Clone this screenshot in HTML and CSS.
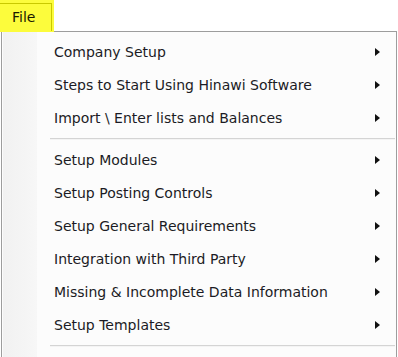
FILE: index.html
```html
<!DOCTYPE html>
<html>
<head>
<meta charset="utf-8">
<link rel="stylesheet" href="styles.css">
</head>
<body>
<div class="bar">
  <div class="tab"><span class="tab-label">File</span></div>
  <div class="bar-rest"></div>
</div>
<div class="menu">
  <div class="gutter"></div>
  <div class="items">
    <div class="item"><span>Company Setup</span><i class="arrow"></i></div>
    <div class="item"><span>Steps to Start Using Hinawi Software</span><i class="arrow"></i></div>
    <div class="item"><span>Import \ Enter lists and Balances</span><i class="arrow"></i></div>
    <div class="sep"></div>
    <div class="item"><span>Setup Modules</span><i class="arrow"></i></div>
    <div class="item"><span>Setup Posting Controls</span><i class="arrow"></i></div>
    <div class="item"><span>Setup General Requirements</span><i class="arrow"></i></div>
    <div class="item"><span>Integration with Third Party</span><i class="arrow"></i></div>
    <div class="item"><span>Missing &amp; Incomplete Data Information</span><i class="arrow"></i></div>
    <div class="item"><span>Setup Templates</span><i class="arrow"></i></div>
    <div class="sep"></div>
  </div>
</div>
</body>
</html>
```
FILE: styles.css
```css
html, body {
  margin: 0;
  padding: 0;
  background: #ffffff;
  width: 398px;
  height: 357px;
  overflow: hidden;
}
body {
  font-family: "DejaVu Sans", Verdana, sans-serif;
  font-size: 14px;
  color: #1b1b24;
}
.bar {
  display: flex;
  height: 32px;
}
.tab {
  width: 54px;
  height: 32px;
  background: #fcfc3c;
  box-sizing: border-box;
  padding-top: 3px;
}
.tab-label {
  display: block;
  width: 52px;
  height: 28px;
  box-sizing: border-box;
  border-top: 1px solid #c9c900;
  border-right: 1px solid #c9c900;
  padding-left: 12px;
  line-height: 27px;
  font-size: 14px;
  color: #1a1a00;
}
.bar-rest { flex: 1; }
.menu {
  display: flex;
  margin-left: 1px;
  width: 396px;
  height: 330px;
  box-sizing: border-box;
  border: 1px solid #9d9d9d;
  border-bottom: none;
  background: #fcfcfc;
  margin-top: -1px;
}
.gutter {
  width: 34px;
  margin-left: 1px;
  background: linear-gradient(to right, #f1f1f1, #f7f7f7);
}
.items {
  flex: 1;
  display: flex;
  flex-direction: column;
  padding-top: 3px;
}
.item {
  height: 33px;
  display: flex;
  align-items: center;
  justify-content: space-between;
  padding-left: 17px;
  padding-right: 16px;
}
.arrow {
  width: 0;
  height: 0;
  border-top: 4px solid transparent;
  border-bottom: 4px solid transparent;
  border-left: 5px solid #111;
}
.sep {
  height: 1px;
  margin: 4px 1px 3px 13px;
  background: #d4d4d4;
  border-bottom: 1px solid #f4f4f4;
}
```
